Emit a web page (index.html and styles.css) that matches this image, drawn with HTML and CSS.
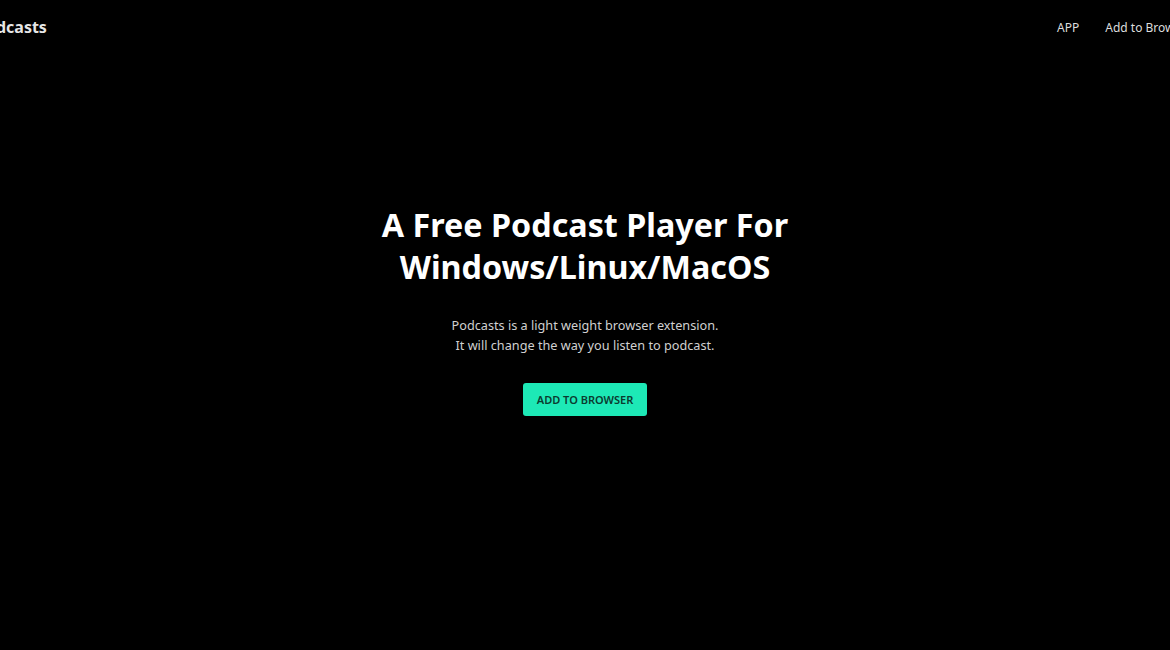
FILE: index.html
```html
<!DOCTYPE html>
<html lang="en">
<head>
<meta charset="utf-8">
<title>Podcasts</title>
<link rel="stylesheet" href="styles.css">
</head>
<body>
<div class="page">
  <header class="header">
    <div class="logo">Podcasts</div>
    <nav class="nav">
      <a class="nav-link" href="#">APP</a>
      <a class="nav-link" href="#">Add to Browser</a>
    </nav>
  </header>
  <main class="hero">
    <h1 class="title">A Free Podcast Player For<br>Windows/Linux/MacOS</h1>
    <p class="lead">Podcasts is a light weight browser extension.<br>It will change the way you listen to podcast.</p>
    <a class="btn" href="#">ADD TO BROWSER</a>
  </main>
</div>
</body>
</html>
```
FILE: styles.css
```css
html, body {
  margin: 0;
  padding: 0;
  background: #000;
  overflow: hidden;
  width: 1170px;
  height: 650px;
}
body {
  font-family: "Noto Sans", "Open Sans", sans-serif;
  color: #fff;
}
.page {
  width: 1170px;
  height: 650px;
  display: flex;
  flex-direction: column;
}
.header {
  display: flex;
  justify-content: space-between;
  align-items: center;
  height: 54px;
  margin-left: -24px;
  margin-right: -22px;
}
.logo {
  font-size: 16px;
  font-weight: 700;
  color: #e6e6e6;
}
.nav {
  display: flex;
  gap: 26px;
}
.nav-link {
  color: #ddd;
  text-decoration: none;
  font-size: 12px;
}
.hero {
  display: flex;
  flex-direction: column;
  align-items: center;
  text-align: center;
  padding-top: 149px;
}
.title {
  margin: 0;
  font-size: 32.3px;
  line-height: 42px;
  font-weight: 700;
  color: #fff;
}
.lead {
  margin: 28px 0 0;
  font-size: 12.7px;
  line-height: 20px;
  color: #d0d0d0;
}
.btn {
  margin-top: 28px;
  display: inline-block;
  background: #1de9b6;
  color: #0b3b30;
  font-size: 11px;
  font-weight: 600;
  text-decoration: none;
  padding: 0 14px;
  height: 33px;
  line-height: 33px;
  border-radius: 3px;
}
```
